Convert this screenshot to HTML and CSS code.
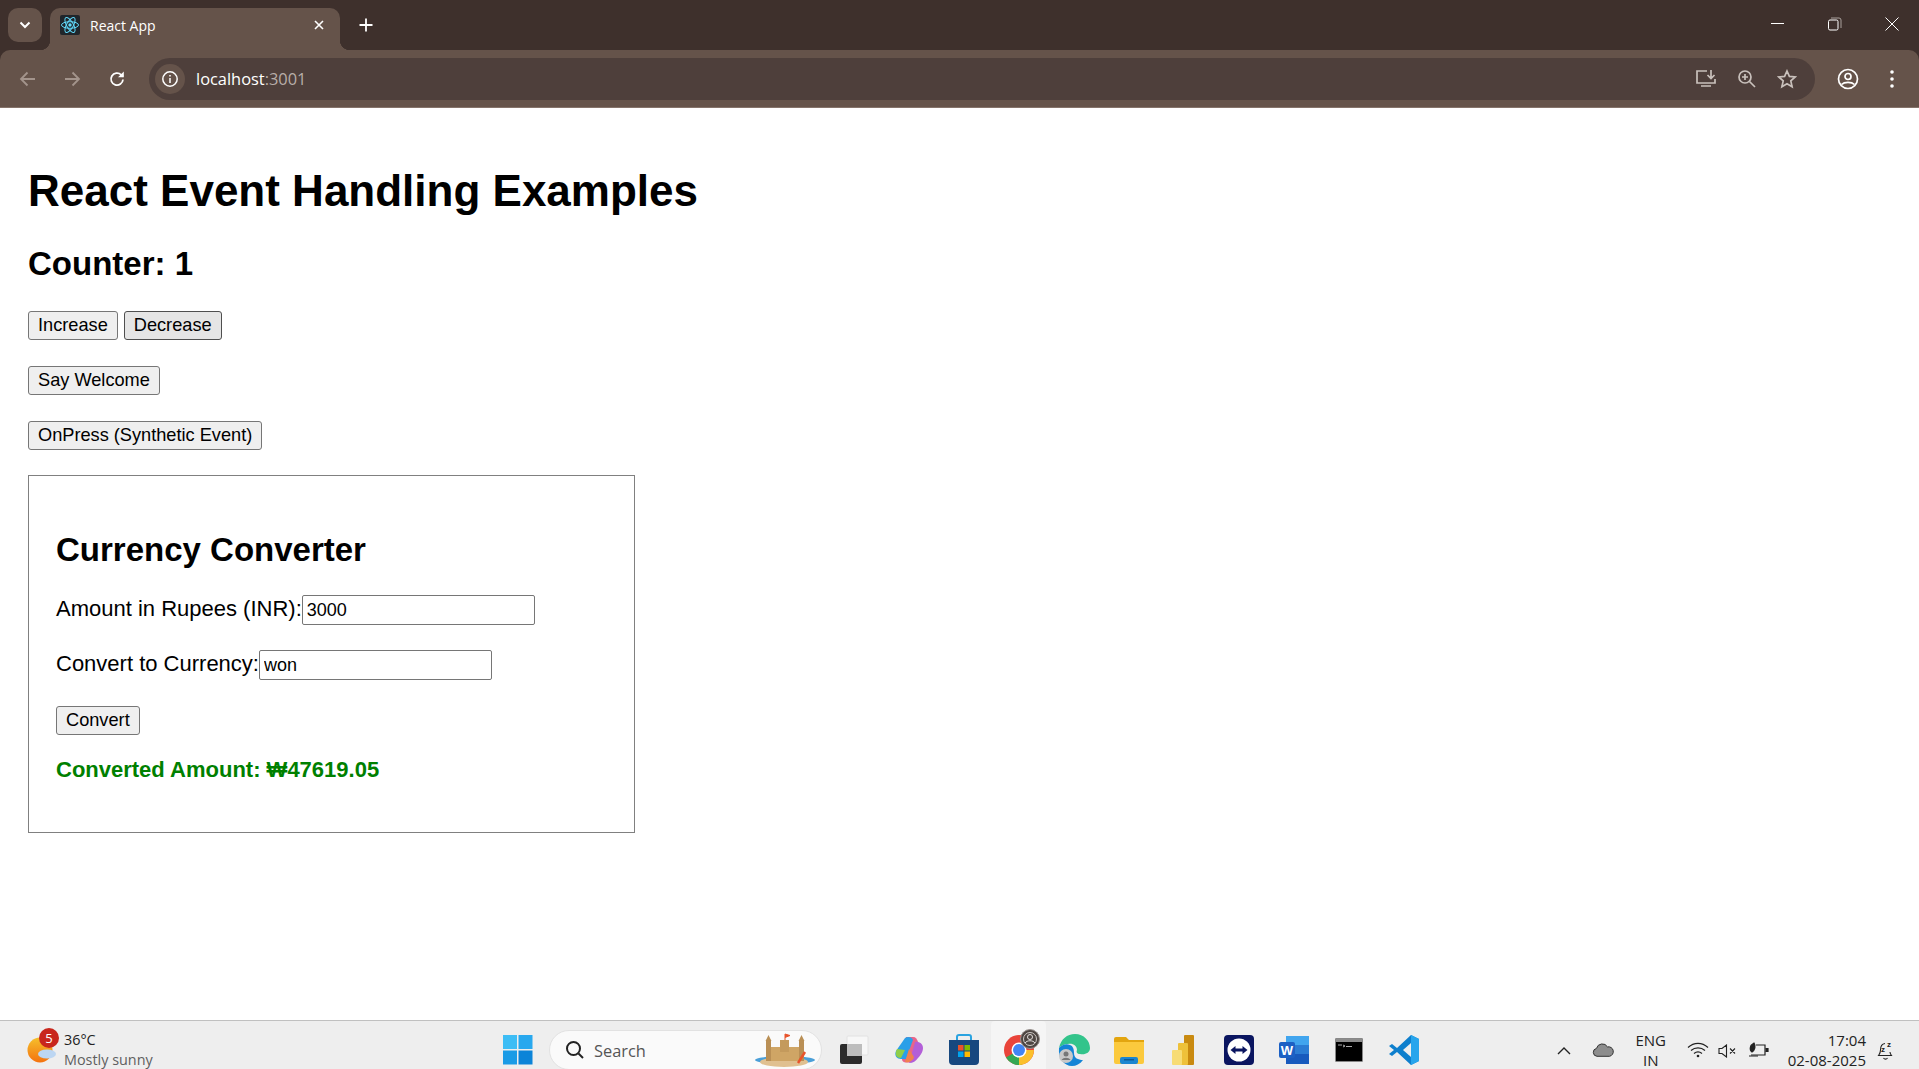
FILE: index.html
```html
<!DOCTYPE html>
<html lang="en">
<head>
    <meta charset="UTF-8">
    <meta name="viewport" content="width=device-width, initial-scale=1.0">
    <title>React App</title>
    <link rel="stylesheet" href="styles.css">
</head>
<body>
    <!-- Browser tab strip -->
    <div class="tabstrip">
        <div class="tab-search">
            <svg width="12" height="8" viewBox="0 0 12 8"><path d="M1.5 1.5 6 6l4.500-4.500" fill="none" stroke="#fff" stroke-width="2"/></svg>
        </div>
        <div class="tab">
            <span class="favicon">
                <svg width="20" height="20" viewBox="0 0 20 20" fill="none" stroke="#61dafb" stroke-width="1">
                    <ellipse cx="10" cy="10" rx="8.500" ry="3.300"/>
                    <ellipse cx="10" cy="10" rx="8.500" ry="3.300" transform="rotate(60 10 10)"/>
                    <ellipse cx="10" cy="10" rx="8.500" ry="3.300" transform="rotate(120 10 10)"/>
                    <circle cx="10" cy="10" r="1.700" fill="#61dafb" stroke="none"/>
                </svg>
            </span>
            <span class="tab-title">React App</span>
            <svg class="tab-close" width="10" height="10" viewBox="0 0 10 10"><path d="M1 1l8 8M9 1l-8 8" stroke="#fff" stroke-width="1.600"/></svg>
        </div>
        <svg class="new-tab" width="14" height="14" viewBox="0 0 14 14"><path d="M7 .5v13M.5 7h13" stroke="#fff" stroke-width="1.800"/></svg>
        <div class="window-controls">
            <svg width="14" height="14" viewBox="0 0 14 14"><path d="M0 6.500h13" stroke="#fff" stroke-width="1"/></svg>
            <svg width="14" height="14" viewBox="0 0 14 14" fill="none"><rect x=".5" y="3" width="9.500" height="10" rx="1.500" stroke="#fff"/><path d="M3 1h8a2 2 0 0 1 2 2v8" stroke="#a9a09c"/></svg>
            <svg width="14" height="14" viewBox="0 0 14 14"><path d="M.5.500l13 13M13.500.5l-13 13" stroke="#fff" stroke-width="1"/></svg>
        </div>
    </div>

    <!-- Browser toolbar -->
    <div class="toolbar">
        <svg class="nav-icon" width="18" height="16" viewBox="0 0 18 16" fill="none" stroke="#a3948c" stroke-width="1.800"><path d="M16 8H2M8.500 1.500 2 8l6.500 6.500"/></svg>
        <svg class="nav-icon" width="18" height="16" viewBox="0 0 18 16" fill="none" stroke="#a3948c" stroke-width="1.800"><path d="M2 8h14M9.500 1.500 16 8l-6.500 6.500"/></svg>
        <svg class="nav-icon" width="18" height="18" viewBox="0 0 18 18" fill="none" stroke="#fff" stroke-width="1.800"><path d="M15 9.500a6 6 0 1 1-1.800-4.700L15 6.500"/><path d="M15.800 1.500v5.800h-5.800" stroke="none" fill="#fff"/></svg>
        <div class="omnibox">
            <span class="site-info">
                <svg width="18" height="18" viewBox="0 0 18 18" fill="none" stroke="#fff" stroke-width="1.500"><circle cx="9" cy="9" r="7.200"/><path d="M9 8v5M9 5v1.600"/></svg>
            </span>
            <span class="url">localhost<span class="url-port">:3001</span></span>
            <span class="omni-icons">
                <svg width="22" height="20" viewBox="0 0 22 20" fill="none" stroke="#c9c1bc" stroke-width="1.700"><path d="M12 2H2v12h18v-4M6 17h10" /><path d="M16 1v8M12.500 6l3.500 3.500L19.500 6"/></svg>
                <svg width="20" height="20" viewBox="0 0 20 20" fill="none" stroke="#c9c1bc" stroke-width="1.700"><circle cx="8" cy="8" r="6"/><path d="M12.500 12.500 18 18M5 8h6M8 5v6"/></svg>
                <svg width="20" height="20" viewBox="0 0 20 20" fill="none" stroke="#c9c1bc" stroke-width="1.700"><path d="M10 2l2.400 5.400 5.800.6-4.400 3.900 1.300 5.800L10 14.700l-5.100 3 1.300-5.800L1.800 8l5.800-.6z"/></svg>
            </span>
        </div>
        <svg class="profile" width="22" height="22" viewBox="0 0 22 22" fill="none" stroke="#fff" stroke-width="1.700"><circle cx="11" cy="11" r="9.500"/><circle cx="11" cy="8.500" r="3"/><path d="M4.500 16.500c3-2.800 10-2.800 13 0"/></svg>
        <svg class="menu" width="4" height="18" viewBox="0 0 4 18" fill="#fff"><circle cx="2" cy="2" r="1.800"/><circle cx="2" cy="9" r="1.800"/><circle cx="2" cy="16" r="1.800"/></svg>
    </div>

    <!-- Page content -->
    <main class="page">
        <h1>React Event Handling Examples</h1>
        <h2 class="counter">Counter: 1</h2>
        <div class="row">
            <button>Increase</button>
            <button class="hovered">Decrease</button>
        </div>
        <div class="row">
            <button>Say Welcome</button>
        </div>
        <div class="row">
            <button>OnPress (Synthetic Event)</button>
        </div>

        <div class="converter">
            <h2>Currency Converter</h2>
            <div class="field">
                <label for="amount">Amount in Rupees (INR):</label>
                <input type="text" id="amount" value="3000">
            </div>
            <div class="field">
                <label for="currency">Convert to Currency:</label>
                <input type="text" id="currency" value="won">
            </div>
            <button>Convert</button>
            <p class="result">Converted Amount: ₩47619.05</p>
        </div>
    </main>

    <!-- Windows taskbar -->
    <footer class="taskbar">
        <div class="weather">
            <span class="weather-icon">
                <svg width="34" height="36" viewBox="0 0 34 36">
                    <defs>
                        <linearGradient id="sun" x1="0" y1="0" x2="0" y2="1">
                            <stop offset="0" stop-color="#f5c02c"/>
                            <stop offset="1" stop-color="#f4720f"/>
                        </linearGradient>
                    </defs>
                    <circle cx="13" cy="22" r="12.500" fill="url(#sun)"/>
                    <ellipse cx="20" cy="26" rx="9" ry="4.500" fill="#bcd6f2"/>
                </svg>
                <span class="badge">5</span>
            </span>
            <div class="weather-text">
                <div>36°C</div>
                <div class="weather-desc">Mostly sunny</div>
            </div>
        </div>

        <div class="apps">
            <span class="app app-start">
                <svg width="30" height="30" viewBox="0 0 30 30"><rect width="14" height="14" fill="#3dbdf5"/><rect x="15.500" width="14" height="14" fill="#28a8ee"/><rect y="15.500" width="14" height="14" fill="#1a9be6"/><rect x="15.500" y="15.500" width="14" height="14" fill="#0c84d8"/></svg>
            </span>
            <div class="search">
                <svg width="20" height="20" viewBox="0 0 20 20" fill="none" stroke="#222" stroke-width="2"><circle cx="8.500" cy="8.500" r="6.500"/><path d="M13.500 13.500 18 18"/></svg>
                <span class="search-text">Search</span>
                <svg class="castle" width="62" height="34" viewBox="0 0 62 34">
                    <ellipse cx="31" cy="27" rx="30" ry="4" fill="#4a9fd8"/>
                    <ellipse cx="30" cy="29" rx="24" ry="5" fill="#e0c090"/>
                    <rect x="15" y="14" width="32" height="14" fill="#cfa565"/>
                    <rect x="12" y="8" width="5" height="20" fill="#b98f55"/>
                    <rect x="45" y="8" width="5" height="20" fill="#b98f55"/>
                    <path d="M14.500 2l3 6h-6zM47.500 2l3 6h-6z" fill="#b98f55"/>
                    <rect x="26" y="7" width="9" height="12" fill="#c49a5c"/>
                    <path d="M31 7V1l5 1.500-5 2" fill="#e8532b" stroke="#e8532b"/>
                    <path d="M44 30l7-11" stroke="#e8532b" stroke-width="2.500"/>
                </svg>
            </div>
            <span class="app">
                <svg width="30" height="30" viewBox="0 0 30 30"><rect x="8" y="1" width="21" height="19" rx="1" fill="#f7f7f7" stroke="#e2e2e2"/><rect x="1" y="9" width="22" height="20" rx="2" fill="#2b2b2b"/><rect x="8" y="9" width="15" height="12" fill="#bdbdbd"/></svg>
            </span>
            <span class="app">
                <svg width="30" height="30" viewBox="0 0 30 30"><path d="M12 2h7c3 0 4 2 5 5l-8 20c-3 1-8 1-8-3z" fill="#e8658a"/><path d="M11 3c3-2 7-1 8 2L12 24H7C3 24 0 21 2 16z" fill="#2a9fe8"/><path d="M3 14c-2 4-2 9 4 9l4-8z" fill="#8fce4a"/><path d="M21 7c3-1 8 1 8 6 0 4-3 8-5 10-2 3-5 5-9 5l3-10z" fill="#b35fd8"/><path d="M11 27c4 1 8-1 9-5l-5-8z" fill="#f08050"/></svg>
            </span>
            <span class="app">
                <svg width="30" height="32" viewBox="0 0 30 32"><path d="M8 6V3a2 2 0 0 1 2-2h10a2 2 0 0 1 2 2v3" fill="none" stroke="#2aa3e0" stroke-width="2"/><path d="M0 6h30v21a4 4 0 0 1-4 4H4a4 4 0 0 1-4-4z" fill="#17487f"/><rect x="9" y="11" width="5.500" height="5.500" fill="#e8532b"/><rect x="15.500" y="11" width="5.500" height="5.500" fill="#7fba00"/><rect x="9" y="17.500" width="5.500" height="5.500" fill="#00a4ef"/><rect x="15.500" y="17.500" width="5.500" height="5.500" fill="#ffb900"/></svg>
            </span>
            <span class="app app-active">
                <svg class="chrome-icon" width="30" height="30" viewBox="0 0 30 30">
                    <circle cx="15" cy="15" r="15" fill="#e9443a"/>
                    <path d="M15 15 2 22.500A15 15 0 0 0 18 29.700z" fill="#34a853"/>
                    <path d="M15 15h14.900A15 15 0 0 1 15 30z" fill="#fbc02d"/>
                    <circle cx="15" cy="15" r="7.500" fill="#fff"/>
                    <circle cx="15" cy="15" r="6" fill="#4285f4"/>
                    <circle cx="26" cy="4" r="9.500" fill="#4e4642" stroke="#9a9390"/>
                    <circle cx="26" cy="2" r="2.500" fill="none" stroke="#e4e0de"/>
                    <path d="M21 8c2-3 8-3 10 0" fill="none" stroke="#e4e0de"/>
                    <circle cx="26" cy="4" r="6.500" fill="none" stroke="#cfcac7"/>
                </svg>
            </span>
            <span class="app">
                <svg width="32" height="32" viewBox="0 0 32 32"><path d="M1 14C3 5 9 0 17 0c9 0 15 7 15 14 0 5-5 7-10 6-3 0-4-2-3-4 0-4-4-7-9-6-4 0-7 2-9 4z" fill="#33c48b"/><path d="M1 14c3-3 7-5 11-3 3 1 4 4 4 8 0 5 4 7 9 7-3 4-7 6-11 6C6 32 0 24 1 14z" fill="#1485d6"/><circle cx="8" cy="22" r="7" fill="#c8c8c8"/><circle cx="8" cy="20" r="2.500" fill="#777"/><path d="M3.500 26c2-3 7-3 9 0" fill="#777"/></svg>
            </span>
            <span class="app">
                <svg width="30" height="28" viewBox="0 0 30 28"><path d="M0 3a2 2 0 0 1 2-2h10l3 3h15v5H0z" fill="#e3a50f"/><path d="M0 6h30v20a2 2 0 0 1-2 2H2a2 2 0 0 1-2-2z" fill="#fbc93d"/><rect x="6" y="21" width="18" height="7" rx="2" fill="#1a86d0"/><rect x="10" y="23" width="10" height="1.500" fill="#0c5a96"/></svg>
            </span>
            <span class="app">
                <svg width="24" height="30" viewBox="0 0 24 30"><rect x="12" y="0" width="10" height="30" rx="1" fill="#c98a10"/><rect x="6" y="8" width="10" height="22" rx="1" fill="#eec13a"/><rect x="0" y="15" width="10" height="15" rx="1" fill="#f7dc75"/></svg>
            </span>
            <span class="app">
                <svg width="30" height="30" viewBox="0 0 30 30"><rect width="30" height="30" rx="4" fill="#0a1560"/><circle cx="15" cy="15" r="11.500" fill="#fff"/><path d="M6.500 15l5-4v2.500h7V11l5 4-5 4v-2.500h-7V19z" fill="#0a1560"/></svg>
            </span>
            <span class="app">
                <svg width="30" height="30" viewBox="0 0 30 30"><rect x="7" y="1" width="23" height="9" fill="#41a5ee"/><rect x="7" y="10" width="23" height="9" fill="#2b7cd3"/><rect x="7" y="19" width="23" height="10" fill="#185abd"/><rect y="7" width="16" height="16" rx="2" fill="#1c60c4"/><text x="8" y="20" class="word-letter">W</text></svg>
            </span>
            <span class="app">
                <svg width="28" height="24" viewBox="0 0 28 24"><rect width="28" height="24" fill="#000" stroke="#b5b5b5" stroke-width="1.500"/><rect x="1" y="1" width="26" height="3" fill="#8c8c8c"/><path d="M3 7h4M8 7l2 1-2 1M11 8.500h6" stroke="#aaa" fill="none"/></svg>
            </span>
            <span class="app">
                <svg width="30" height="30" viewBox="0 0 30 30"><path d="M22 0l8 4v22l-8 4L8 17l-5 4-3-2 5-4-5-4 3-2 5 4z" fill="#0e7fcd"/><path d="M22 0l8 4v22l-8 4z" fill="#27a5ec"/><path d="M22 8l-8 7 8 7z" fill="#eeeeee"/></svg>
            </span>
        </div>

        <div class="tray">
            <svg class="tray-chevron" width="14" height="8" viewBox="0 0 14 8" fill="none" stroke="#222" stroke-width="1.400"><path d="M1 7l6-6 6 6"/></svg>
            <svg class="tray-cloud" width="22" height="14" viewBox="0 0 22 14"><path d="M5 13.300a4 4 0 0 1-.5-7.900 6 6 0 0 1 11-1.500 4.500 4.500 0 0 1 2 9.400z" fill="#8d8d8d" stroke="#333"/></svg>
            <div class="lang"><div>ENG</div><div>IN</div></div>
            <svg class="tray-wifi" width="22" height="16" viewBox="0 0 22 16" fill="none" stroke="#222" stroke-width="1.200"><path d="M1 5.500c6-5.500 14-5.500 20 0M4 8.500c4-3.500 10-3.500 14 0M7 11.500c2.500-2 5.500-2 8 0"/><circle cx="11" cy="14" r="1.300" fill="#222" stroke="none"/></svg>
            <svg class="tray-sound" width="20" height="14" viewBox="0 0 20 14" fill="none" stroke="#222" stroke-width="1.100"><path d="M1 4.500h3L8.500 1v12L4 9.500H1zM12 4.500l5 5M17 4.500l-5 5"/></svg>
            <svg class="tray-battery" width="22" height="16" viewBox="0 0 22 16" fill="none" stroke="#222" stroke-width="1.200"><path d="M8 3h9v10H3"/><path d="M17.500 6.500H20v3h-2.500" fill="#222"/><path d="M6 1C2 3 1 8 4 10c3-2 4-6 2-9zM1 14h9" fill="#222"/></svg>
            <div class="clock"><div>17:04</div><div>02-08-2025</div></div>
            <svg class="tray-bell" width="18" height="20" viewBox="0 0 18 20" fill="none" stroke="#222" stroke-width="1.100"><path d="M8 2.500C4 3 3.500 6 3.500 9c0 3-1 4-2 5.500h13c-1-1.500-1.500-2-1.500-3.500M6.500 17c1 1.500 3 1.500 4 0"/><text x="6" y="11" class="bell-z">z</text><text x="12" y="6" class="bell-z">z</text></svg>
        </div>
    </footer>
</body>
</html>
```

FILE: styles.css
```css
/* General page setup */
html, body {
    height: 100%;
}
body {
    margin: 0;
    display: flex;
    flex-direction: column;
    overflow: hidden;
    background-color: #3e302c; /* Shows behind the rounded toolbar corners */
    font-family: "Liberation Sans", Arial, sans-serif;
}
/* Tab strip */
.tabstrip {
    flex: none;
    height: 50px;
    padding: 8px 0 0 8px;
    box-sizing: border-box;
    display: flex;
    background-color: #3e302c;
    color: #fff;
    font-family: "Open Sans", sans-serif;
}
.tab-search {
    width: 34px;
    height: 34px;
    border-radius: 10px;
    background-color: #65534a;
    display: flex;
    align-items: center;
    justify-content: center;
}
.tab {
    position: relative;
    width: 290px;
    margin-left: 8px;
    padding: 0 16px 8px 10px;
    box-sizing: border-box;
    display: flex;
    align-items: center;
    border-radius: 10px 10px 0 0;
    background-color: #65534a;
}
/* Curved feet of the active tab */
.tab::before,
.tab::after {
    content: "";
    position: absolute;
    bottom: 0;
    width: 10px;
    height: 10px;
}
.tab::before {
    left: -10px;
    background: radial-gradient(circle at 0 0, transparent 10px, #65534a 10.500px);
}
.tab::after {
    right: -10px;
    background: radial-gradient(circle at 100% 0, transparent 10px, #65534a 10.500px);
}
.favicon {
    width: 20px;
    height: 20px;
    background-color: #20262b;
    border-radius: 2px;
    display: flex;
}
.tab-title {
    flex: 1;
    margin-left: 10px;
    font-size: 14px;
}
.new-tab {
    margin: 10px 0 0 19px;
}
.window-controls {
    margin-left: auto;
    padding: 9px 20px 0 0;
    display: flex;
    gap: 43px;
    height: 14px;
}
/* Toolbar with the address bar */
.toolbar {
    flex: none;
    height: 58px;
    box-sizing: border-box;
    padding: 0 25px 0 19px;
    display: flex;
    align-items: center;
    border-radius: 10px 10px 0 0;
    border-bottom: 1px solid #85736a;
    background-color: #65534a;
}
.nav-icon {
    margin-right: 26px;
}
.nav-icon:nth-child(2) {
    margin-right: 27px;
}
.nav-icon:nth-child(3) {
    margin-right: 23px;
}
.omnibox {
    flex: 1;
    height: 42px;
    padding: 0 18px 0 6px;
    display: flex;
    align-items: center;
    border-radius: 21px;
    background-color: #4e3f3b;
    color: #fff;
    font-family: "Open Sans", sans-serif;
    font-size: 16.400px;
}
.site-info {
    width: 30px;
    height: 30px;
    margin-right: 11px;
    border-radius: 50%;
    background-color: #65534a;
    display: flex;
    align-items: center;
    justify-content: center;
}
.url-port {
    color: #b8aea9;
}
.omni-icons {
    margin-left: auto;
    display: flex;
    align-items: center;
    gap: 20px;
}
.profile {
    margin-left: 22px;
}
.menu {
    margin-left: 31px;
}
/* Page content */
.page {
    flex: 1;
    padding: 0 28px;
    background-color: #fff;
}
h1 {
    margin: 60px 0 0;
    font-size: 44px;
    line-height: 46px;
}
h2 {
    margin: 0;
    font-size: 33px;
    line-height: 38px;
}
.counter {
    margin-top: 31px;
}
.row {
    margin-top: 26px;
    display: flex;
    gap: 6px;
}
.counter + .row {
    margin-top: 28px;
}
button {
    height: 29px;
    padding: 0 9px 1px;
    border: 1px solid #767676;
    border-radius: 3px;
    background-color: #efefef;
    color: #000;
    font-family: "Liberation Sans", Arial, sans-serif;
    font-size: 18.200px;
}
.hovered {
    background-color: #e5e5e5;
    border-color: #4f4f4f;
}
/* Currency converter card */
.converter {
    width: 607px;
    height: 358px;
    margin-top: 25px;
    padding: 55px 27px 0;
    box-sizing: border-box;
    border: 1px solid #808080;
}
.field {
    margin-top: 26px;
    display: flex;
    align-items: baseline;
    font-size: 22px;
}
.field + .field {
    margin-top: 25px;
}
.field + button {
    margin-top: 26px;
}
input {
    width: 233px;
    height: 30px;
    padding: 0 4px;
    box-sizing: border-box;
    border: 1px solid #767676;
    border-radius: 2px;
    font-family: "Liberation Sans", Arial, sans-serif;
    font-size: 18px;
}
.result {
    margin: 22px 0 0;
    color: #008000;
    font-size: 22px;
    font-weight: bold;
}
/* Windows taskbar */
.taskbar {
    flex: none;
    height: 49px;
    box-sizing: border-box;
    overflow: hidden;
    display: flex;
    align-items: flex-start;
    border-top: 1px solid #c0c0c0;
    background-color: #eeeeee;
    color: #222;
    font-family: "Open Sans", sans-serif;
    font-size: 15px;
}
.weather {
    width: 495px;
    padding: 7px 0 0 27px;
    box-sizing: border-box;
    display: flex;
    font-size: 14.400px;
}
.weather-icon {
    position: relative;
    width: 37px;
    height: 36px;
    display: block;
}
.badge {
    position: absolute;
    top: 0;
    left: 12px;
    width: 20px;
    height: 20px;
    border-radius: 50%;
    background-color: #c8261c;
    color: #fff;
    font-size: 13px;
    line-height: 20px;
    text-align: center;
}
.weather-text {
    line-height: 20px;
    margin-top: 2px;
}
.weather-desc {
    color: #5f5f5f;
}
.apps {
    display: flex;
    align-items: flex-start;
}
/* Slot is taller than the visible bar so the icons sit where the cropped bar had them */
.app {
    flex: none;
    width: 55px;
    height: 58px;
    display: flex;
    justify-content: center;
    align-items: center;
}
.app-start {
    width: 46px;
}
.app-active {
    border-radius: 4px;
    background-color: #f5f5f5;
}
.chrome-icon {
    overflow: visible;
}
.search {
    flex: none;
    width: 273px;
    height: 40px;
    margin: 9px 4px 0 8px;
    padding: 0 0 0 15px;
    box-sizing: border-box;
    display: flex;
    align-items: center;
    border: 1px solid #e2e2e2;
    border-radius: 20px;
    background-color: #fafafa;
    color: #555;
    font-size: 16.400px;
}
.search-text {
    flex: 1;
    margin-left: 9px;
}
.castle {
    margin-right: 5px;
}
.word-letter {
    fill: #fff;
    font-family: "Liberation Sans", Arial, sans-serif;
    font-size: 13px;
    font-weight: bold;
    text-anchor: middle;
}
.bell-z {
    fill: #222;
    stroke: none;
    font-family: "Liberation Sans", Arial, sans-serif;
    font-size: 8px;
    font-weight: bold;
    text-anchor: middle;
}
.tray {
    flex: 1;
    display: flex;
    align-items: flex-start;
    padding: 0 24px 0 0;
    justify-content: flex-end;
}
.tray-chevron {
    margin: 26px 0 0 0;
}
.tray-cloud {
    margin: 22px 0 0 21px;
}
.lang {
    margin: 9px 0 0 17px;
    width: 40px;
    line-height: 20px;
    text-align: center;
}
.tray-wifi {
    margin: 21px 0 0 16px;
}
.tray-sound {
    margin: 23px 0 0 9px;
}
.tray-battery {
    margin: 21px 0 0 10px;
}
.clock {
    margin: 9px 0 0 18px;
    line-height: 20px;
    text-align: right;
}
.tray-bell {
    margin: 20px 0 0 11px;
}
```
